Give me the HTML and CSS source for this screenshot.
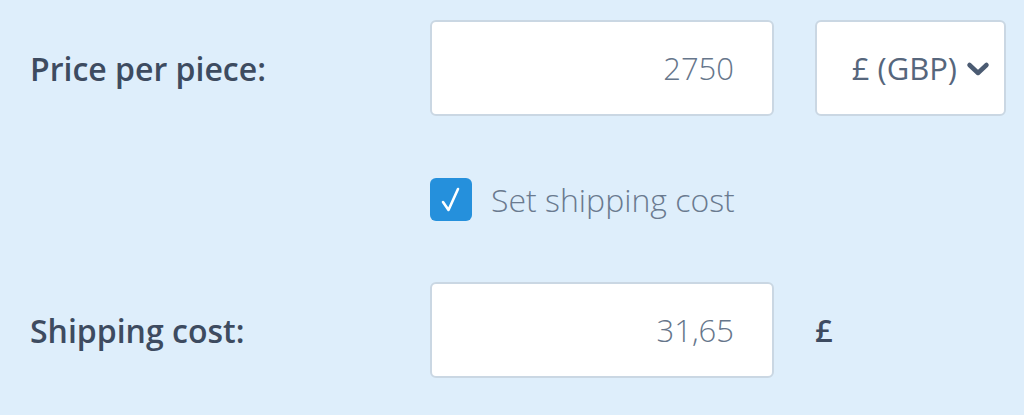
FILE: index.html
```html
<!DOCTYPE html>
<html lang="en">
<head>
  <meta charset="UTF-8">
  <title>Price settings</title>
  <link rel="stylesheet" href="styles.css">
</head>
<body>
  <main class="form">
    <div class="row">
      <label class="label" for="price">Price per piece:</label>
      <input id="price" class="field" type="text" value="2750">
      <div class="select" role="button">
        <span>£ (GBP)</span>
        <svg class="chevron" width="24" height="16" viewBox="0 0 24 16" aria-hidden="true">
          <path d="M3.5 4 L12 12 L20.5 4" fill="none" stroke="#4b5b72" stroke-width="4.5" stroke-linecap="round" stroke-linejoin="round"/>
        </svg>
      </div>
    </div>

    <div class="check-row">
      <span class="checkbox" aria-hidden="true">
        <svg width="42" height="43" viewBox="0 0 42 43">
          <path d="M13 24 L18.5 32 L28 11" fill="none" stroke="#fff" stroke-width="2.6" stroke-linecap="round" stroke-linejoin="round"/>
        </svg>
      </span>
      <span class="check-label">Set shipping cost</span>
    </div>

    <div class="row">
      <label class="label" for="shipping">Shipping cost:</label>
      <input id="shipping" class="field" type="text" value="31,65">
      <span class="currency">£</span>
    </div>
  </main>
</body>
</html>
```

FILE: styles.css
```css
body {
  margin: 0;
  background-color: #deeefb;
  font-family: 'Open Sans', 'Liberation Sans', sans-serif;
  color: #3d4b60;
}

.form {
  display: flex;
  flex-direction: column;
  padding: 20px 0 0 30px;
}

.row {
  display: flex;
  align-items: center;
  height: 96px;
}

.label {
  width: 400px;
  font-size: 32px;
  font-weight: 600;
  color: #3d4b60;
}

.field {
  box-sizing: border-box;
  width: 344px;
  height: 96px;
  margin: 0;
  padding: 0 38px 0 10px;
  border: 2px solid #cad7e3;
  border-radius: 6px;
  background-color: #fff;
  font-family: 'Open Sans', 'Liberation Sans', sans-serif;
  font-size: 31px;
  font-weight: 300;
  color: #66768b;
  text-align: right;
  outline: 0;
}

.select {
  box-sizing: border-box;
  display: flex;
  align-items: center;
  justify-content: flex-end;
  gap: 9px;
  width: 191px;
  height: 96px;
  margin-left: 41px;
  padding-right: 14px;
  border: 2px solid #cad7e3;
  border-radius: 6px;
  background-color: #fff;
  font-size: 31px;
  font-weight: 400;
  color: #56667c;
}

.chevron {
  margin-top: 2px;
}

.check-row {
  display: flex;
  align-items: center;
  gap: 19px;
  height: 43px;
  margin: 62px 0 61px 400px;
}

.checkbox {
  display: block;
  width: 42px;
  height: 43px;
  border-radius: 6px;
  background-color: #2590dc;
}

.checkbox svg {
  display: block;
}

.check-label {
  font-size: 32px;
  font-weight: 300;
  color: #6a7a8f;
}

.currency {
  margin-left: 41px;
  font-size: 31px;
  font-weight: 600;
  color: #3d4b60;
}
```
